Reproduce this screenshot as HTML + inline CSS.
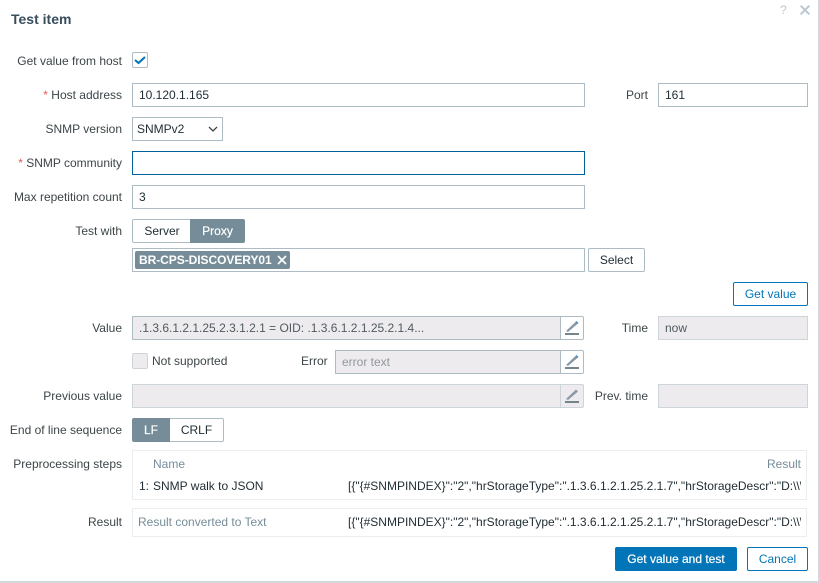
<!DOCTYPE html>
<html>
<head>
<meta charset="utf-8">
<style>
html,body{margin:0;padding:0;width:820px;height:582px;overflow:hidden;background:#fff;font-family:"Liberation Sans",Arial,sans-serif;font-size:12px;color:#1f2c33}
.a{position:absolute;box-sizing:border-box;white-space:nowrap}
.l{position:absolute;box-sizing:border-box;right:698px;height:24px;line-height:24px;color:#3c4548;white-space:nowrap;text-align:right}
.r{color:#e45959}
.i{position:absolute;box-sizing:border-box;height:24px;line-height:22px;border:1px solid #acbbc4;background:#fff;padding-left:6px;color:#1f2c33;white-space:nowrap;overflow:hidden}
.d{background:#eeebee;border-color:#cdd4da;color:#4f5a60}
.v{background:#eeebee;border-color:#acbbc4;color:#4f5a60}
.b{position:absolute;box-sizing:border-box;height:24px;line-height:22px;text-align:center;border:1px solid #acbbc4;background:#fff;border-radius:2px;color:#1f2c33}
.bl{border-color:#0275b8;color:#0275b8}
.on{background:#768d99;border-color:#768d99;color:#fff}
.p{position:absolute;box-sizing:border-box;width:24px;height:24px;border:1px solid #acbbc4;border-radius:0 2px 2px 0;background:#fff}
.p svg{position:absolute;left:3px;top:3px}
.box{position:absolute;box-sizing:border-box;border:1px solid #ebeef0;background:#fff}
.t{position:absolute;white-space:nowrap;height:14px;line-height:14px}
</style>
</head>
<body>
<div class="a" style="left:0;top:0;width:820px;height:583px;border-right:2px solid #d4d8dc;border-bottom:2px solid #d4d8dc;background:#fff"></div>

<div class="t" style="left:11px;top:11px;font-size:14px;line-height:16px;height:16px;font-weight:bold;color:#384d5c">Test item</div>
<div class="t" style="left:780px;top:3px;color:#bcc6d0;font-size:12px">?</div>
<svg class="a" style="left:800px;top:5px" width="10" height="10" viewBox="0 0 10 10"><path d="M.7 .7L9.300 9.300M9.300 .7L.7 9.300" stroke="#bcc6d0" stroke-width="2" fill="none"/></svg>

<div class="l" style="top:49px">Get value from host</div>
<div class="a" style="left:132px;top:52px;width:16px;height:16px;border:1px solid #acbbc4;border-radius:2px;background:#fff"></div>
<svg class="a" style="left:132px;top:52px" width="16" height="16" viewBox="0 0 16 16"><path d="M3 8L6.500 11L13 5" stroke="#0275b8" stroke-width="2" fill="none"/></svg>

<div class="l" style="top:83px"><span class="r">*</span> Host address</div>
<div class="i" style="left:132px;top:83px;width:453px">10.120.1.165</div>
<div class="l" style="top:83px;right:172px">Port</div>
<div class="i" style="left:658px;top:83px;width:150px">161</div>

<div class="l" style="top:117px">SNMP version</div>
<div class="i" style="left:132px;top:117px;width:91px;padding-left:4px">SNMPv2</div>
<svg class="a" style="left:208px;top:125px" width="10" height="8" viewBox="0 0 10 8"><path d="M1 2L5 6L9 2" stroke="#3c4548" stroke-width="1.3" fill="none"/></svg>

<div class="l" style="top:151px"><span class="r">*</span> SNMP community</div>
<div class="i" style="left:132px;top:151px;width:453px;border-color:#00609c"></div>

<div class="l" style="top:185px">Max repetition count</div>
<div class="i" style="left:132px;top:185px;width:453px">3</div>

<div class="l" style="top:219px">Test with</div>
<div class="b" style="left:132px;top:219px;width:59px;border-radius:2px 0 0 2px;border-right:0">Server</div>
<div class="b on" style="left:190px;top:219px;width:55px;border-radius:0 2px 2px 0;font-weight:normal;-webkit-text-stroke:.2px #fff">Proxy</div>

<div class="i" style="left:132px;top:248px;width:453px"></div>
<div class="a" style="left:135px;top:251px;width:155px;height:18px;line-height:18px;background:#768d99;border-radius:2px;color:#fff;font-weight:bold;padding-left:4px;font-size:12px;letter-spacing:-.05px">BR-CPS-DISCOVERY01</div>
<svg class="a" style="left:277px;top:255px" width="10" height="10" viewBox="0 0 10 10"><path d="M1 1L9 9M9 1L1 9" stroke="#fff" stroke-width="1.7" fill="none"/></svg>
<div class="b" style="left:588px;top:248px;width:57px">Select</div>

<div class="b bl" style="left:733px;top:282px;width:75px">Get value</div>

<div class="l" style="top:316px">Value</div>
<div class="i v" style="left:132px;top:316px;width:430px">.1.3.6.1.2.1.25.2.3.1.2.1 = OID: .1.3.6.1.2.1.25.2.1.4...</div>
<div class="p" style="left:560px;top:316px"><svg width="16" height="16" viewBox="0 0 16 16"><path d="M2 11L12 1.500L14 3.500L4 12Z" fill="#8a98a3"/><path d="M12 1.500L14 3.500" stroke="#4a90c8" stroke-width="1.500"/><rect x="1" y="13" width="14" height="2" fill="#76848e"/></svg></div>
<div class="l" style="top:316px;right:172px">Time</div>
<div class="i d" style="left:658px;top:316px;width:150px">now</div>

<div class="a" style="left:132px;top:353px;width:16px;height:16px;border:1px solid #cdd4da;border-radius:2px;background:#eeebee"></div>
<div class="t" style="left:152px;top:354px;color:#3c4548">Not supported</div>
<div class="t" style="left:301px;top:354px;color:#3c4548">Error</div>
<div class="i v" style="left:335px;top:350px;width:227px;color:#8f989e">error text</div>
<div class="p" style="left:560px;top:350px"><svg width="16" height="16" viewBox="0 0 16 16"><path d="M2 11L12 1.500L14 3.500L4 12Z" fill="#8a98a3"/><path d="M12 1.500L14 3.500" stroke="#4a90c8" stroke-width="1.500"/><rect x="1" y="13" width="14" height="2" fill="#76848e"/></svg></div>

<div class="l" style="top:384px">Previous value</div>
<div class="i d" style="left:132px;top:384px;width:430px"></div>
<div class="p" style="left:560px;top:384px;background:#eeebee;border-color:#cdd4da"><svg width="16" height="16" viewBox="0 0 16 16"><path d="M2 11L12 1.500L14 3.500L4 12Z" fill="#8a98a3"/><rect x="1" y="13" width="14" height="2" fill="#76848e"/></svg></div>
<div class="l" style="top:384px;right:172px">Prev. time</div>
<div class="i d" style="left:658px;top:384px;width:150px"></div>

<div class="l" style="top:418px">End of line sequence</div>
<div class="b on" style="left:132px;top:418px;width:38px;border-radius:2px 0 0 2px;-webkit-text-stroke:.2px #fff">LF</div>
<div class="b" style="left:170px;top:418px;width:54px;border-radius:0 2px 2px 0;border-left:0">CRLF</div>

<div class="l" style="top:452px">Preprocessing steps</div>
<div class="box" style="left:132px;top:450px;width:675px;height:50px"></div>
<div class="t" style="left:153px;top:457px;color:#768d99">Name</div>
<div class="t" style="right:19px;top:457px;color:#768d99">Result</div>
<div class="t" style="left:139px;top:479px">1:</div>
<div class="t" style="left:153px;top:479px">SNMP walk to JSON</div>
<div class="t" style="left:348px;top:479px;width:453px;overflow:hidden">[{"{#SNMPINDEX}":"2","hrStorageType":".1.3.6.1.2.1.25.2.1.7","hrStorageDescr":"D:\\\\</div>

<div class="l" style="top:510px">Result</div>
<div class="box" style="left:132px;top:508px;width:675px;height:29px"></div>
<div class="t" style="left:138px;top:515px;color:#768d99">Result converted to Text</div>
<div class="t" style="left:348px;top:515px;width:453px;overflow:hidden">[{"{#SNMPINDEX}":"2","hrStorageType":".1.3.6.1.2.1.25.2.1.7","hrStorageDescr":"D:\\\\</div>

<div class="b" style="left:615px;top:547px;width:122px;background:#0275b8;border-color:#0275b8;color:#fff;-webkit-text-stroke:.2px #fff">Get value and test</div>
<div class="b bl" style="left:747px;top:547px;width:61px">Cancel</div>
</body>
</html>
